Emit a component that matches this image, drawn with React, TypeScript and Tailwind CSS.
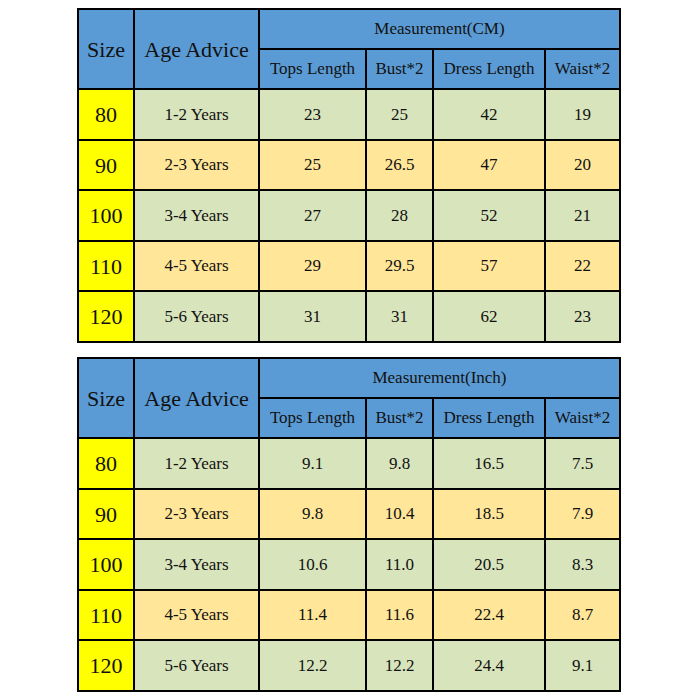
import React from 'react'

type Row = { size: string; age: string; vals: string[] }

const CM_ROWS: Row[] = [
  { size: '80', age: '1-2 Years', vals: ['23', '25', '42', '19'] },
  { size: '90', age: '2-3 Years', vals: ['25', '26.5', '47', '20'] },
  { size: '100', age: '3-4 Years', vals: ['27', '28', '52', '21'] },
  { size: '110', age: '4-5 Years', vals: ['29', '29.5', '57', '22'] },
  { size: '120', age: '5-6 Years', vals: ['31', '31', '62', '23'] },
]

const INCH_ROWS: Row[] = [
  { size: '80', age: '1-2 Years', vals: ['9.1', '9.8', '16.5', '7.5'] },
  { size: '90', age: '2-3 Years', vals: ['9.8', '10.4', '18.5', '7.9'] },
  { size: '100', age: '3-4 Years', vals: ['10.6', '11.0', '20.5', '8.3'] },
  { size: '110', age: '4-5 Years', vals: ['11.4', '11.6', '22.4', '8.7'] },
  { size: '120', age: '5-6 Years', vals: ['12.2', '12.2', '24.4', '9.1'] },
]

const SUB_HEADERS = ['Tops Length', 'Bust*2', 'Dress Length', 'Waist*2']

function SizeTable({ unit, rows }: { unit: string; rows: Row[] }) {
  return (
    <div className="grid w-[544px] grid-cols-[54px_123px_105px_65px_110px_73px] grid-rows-[38px_38px_49px_48px_49px_48px_49px] gap-[2px] bg-black p-[2px] text-[#111]">
      <div className="row-span-2 flex items-center justify-center bg-[#5b9bd5] text-[22px]">Size</div>
      <div className="row-span-2 flex items-center justify-center bg-[#5b9bd5] text-[22px]">Age Advice</div>
      <div className="col-span-4 flex items-center justify-center bg-[#5b9bd5] text-[17px]">Measurement({unit})</div>
      {SUB_HEADERS.map(h => (
        <div key={h} className="flex items-center justify-center bg-[#5b9bd5] text-[17px] whitespace-nowrap">{h}</div>
      ))}
      {rows.map((r, i) => {
        const bg = i % 2 === 0 ? 'bg-[#d8e4bc]' : 'bg-[#ffe699]'
        return (
          <React.Fragment key={r.size}>
            <div className="flex items-center justify-center bg-[#ffff00] text-[22px]">{r.size}</div>
            <div className={`flex items-center justify-center text-[17px] ${bg}`}>{r.age}</div>
            {r.vals.map((v, j) => (
              <div key={j} className={`flex items-center justify-center text-[17px] ${bg}`}>{v}</div>
            ))}
          </React.Fragment>
        )
      })}
    </div>
  )
}

export default function App() {
  return (
    <div className="flex h-[700px] w-[700px] flex-col gap-[14px] bg-white pl-[77px] pt-[8px] font-['Liberation_Serif',serif]">
      <SizeTable unit="CM" rows={CM_ROWS} />
      <SizeTable unit="Inch" rows={INCH_ROWS} />
    </div>
  )
}
